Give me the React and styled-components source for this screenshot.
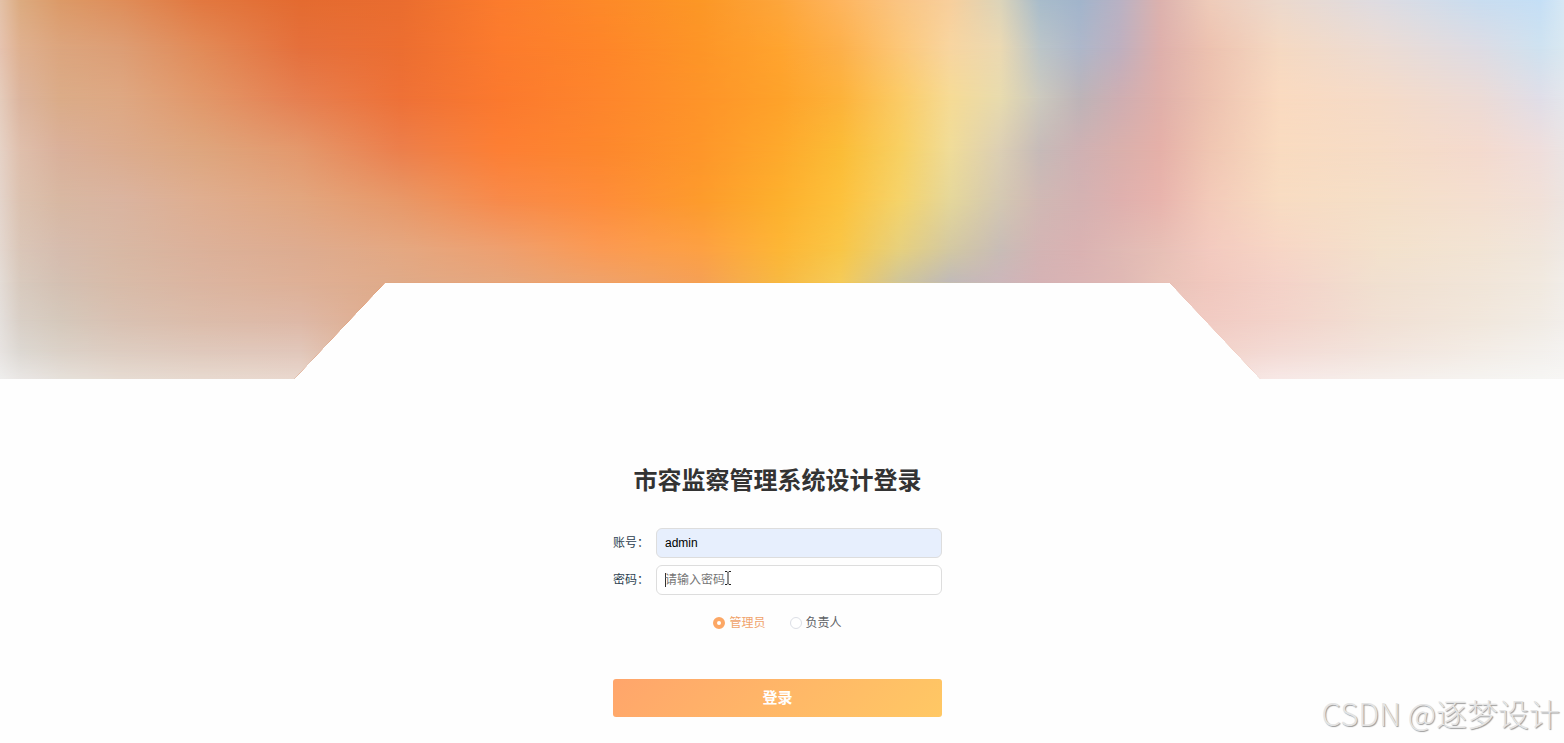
import React, { useState } from "react";
import styled, { createGlobalStyle } from "styled-components";

// Colour bands of the banner, top to bottom. Every band is a left-to-right
// gradient, and each one fades into the next.
const bannerWidth = 1564;
const bannerHeight = 379;
const stops = [0, 20, 60, 120, 200, 300, 400, 500, 600, 700, 780, 840, 900, 950, 1000, 1040, 1080, 1120, 1160, 1210, 1280, 1380, 1480, 1540, 1564];

const bands = [
  { y: 0, colors: "e4c2a8 dcab80 dc9a68 df8e5a e27840 e46b30 ea6d2f fc7c2d fd8929 fc9726 fda63c feb55e fac583 f8cf9c dcd4ba a8bccb a2b5cc b9b2c4 dcb2ae efccba ecd9cd dedce2 c9ddf0 c5dff6 d6e8f5" },
  { y: 48, colors: "e6c3b0 dfb190 dca57e dd9e75 e28b58 e5703c ec6e31 fc7b2d fe8529 fd9527 ffa42f fdb04a fcc778 f8d5a0 ebd9b2 bcc5c8 aeb7ca bfb0bf deb0ac edc2b0 f5d9c2 ecdcd4 dddce4 cfe2f0 d9e8f1" },
  { y: 98, colors: "e5ccbc dcb59e dbac88 dea883 e2986a e67f50 ee7137 fb792e fe852c fe9429 fea22a fdb23a fbcb66 f6db95 e8dbae ccc9be bdb4b8 cfaeb2 e0b0aa edc2b0 fadac0 f5dbc8 ecdbd6 e0dee8 e4e6ec" },
  { y: 150, colors: "e6d2c6 dfbfac dab09a dcac8e dea67e e4986c ec7f4c fd7f34 fd872d fe962a fea92c fbbc36 f8d062 f0dc98 dccfb4 c6bab8 cfb1b3 dab0ac e5b0a8 f0c6b2 f9dbc0 f6dcc6 f4dace efdedc ebe4e4" },
  { y: 200, colors: "e4d4cb dcc2b0 d8b8a2 dab4a0 dfae90 e2a67f e89868 f88a4a fe8c3a fd9b2c fdb02d fdc13c f5d36a e5d79a d4c8b2 d0b8b4 d4b2b2 dfb0ae e8b4ad f3cab9 f8dcc2 f5dfc8 f4dfd0 f1e0d8 ede4e0" },
  { y: 250, colors: "e4d8d0 dac6b8 d6bcae d8b8a4 dcb19a deac90 e4a882 eea070 fb9a54 fda044 fdb636 f9c646 e6d07e d3c8a2 c8bcb6 d4b4b4 dab2b2 e0b9b4 e7bfb6 f3cabf f7d6c6 f3e1cc f2e4d4 f0e6dc efe9e3" },
  { y: 282, colors: "e4dcd6 d8cabe d4c0b2 d8bba8 dbb5a0 deb096 e0aa88 e6a67c efa26a f5a055 f7b942 f5cb58 cfc59a c0bab8 ccb6ba d5b2b4 dab4b4 dfb8b4 e8c2b8 f1c8be f4d2c8 f1e0d0 f1e5d8 f1e9df f1ede8" },
  { y: 320, colors: "e4dfdc d9cfc6 d5c8bb d9c1b2 dcbcaa deb8a6 e0aa88 e6a67c efa26a f5a055 f7b942 f5cb58 cfc59a c0bab8 ccb6ba d5b2b4 dab4b4 dfb8b4 edcac2 f1cbc3 f3d3ca f1e0d4 f1e7dc f1ebe4 f2eeea" },
  { y: 350, colors: "e7e3e0 dcd7d1 dbd1c7 ddccc0 dfc8bb e1c6b9 e0aa88 e6a67c efa26a f5a055 f7b942 f5cb58 cfc59a c0bab8 ccb6ba d5b2b4 dab4b4 dfb8b4 edcac2 f2d2ca f3dad4 f2e4dc f3ece5 f3f0ec f4f2f0" },
  { y: 379, colors: "eeedec e9e6e4 e6e0da e6dbd2 e7d9cf e9d8ce e0aa88 e6a67c efa26a f5a055 f7b942 f5cb58 cfc59a c0bab8 ccb6ba d5b2b4 dab4b4 dfb8b4 edcac2 f5e0dc f7e8e6 f5eeea f5f3f0 f6f5f3 f7f6f4" },
];

const percent = (value, total) => `${((value / total) * 100).toFixed(2)}%`;

const bandGradient = (band) =>
  `linear-gradient(90deg, ${band.colors
    .split(" ")
    .map((color, i) => `#${color} ${percent(stops[i], bannerWidth)}`)
    .join(", ")})`;

const bandMask = (index) => {
  if (index === 0) return "none";
  const from = percent(bands[index - 1].y, bannerHeight);
  const to = percent(bands[index].y, bannerHeight);
  return `linear-gradient(180deg, transparent ${from}, #000 ${to})`;
};

const App = () => {
  const [account, setAccount] = useState("admin");
  const [password, setPassword] = useState("");
  const [role, setRole] = useState("管理员");

  return (
    <Page>
      <GlobalStyle />
      <Banner>
        {bands.map((band, i) => (
          <Band key={band.y} style={{ backgroundImage: bandGradient(band), maskImage: bandMask(i) }} />
        ))}
      </Banner>
      <Form onSubmit={(e) => e.preventDefault()}>
        <Title>市容监察管理系统设计登录</Title>
        <Fields>
          <Field>
            <FieldName htmlFor="account">账号：</FieldName>
            <Input
              id="account"
              $filled
              placeholder="请输入账号"
              value={account}
              onChange={(e) => setAccount(e.target.value)}
            />
          </Field>
          <Field>
            <FieldName htmlFor="password">密码：</FieldName>
            <Input
              id="password"
              type="password"
              placeholder="请输入密码"
              autoFocus
              value={password}
              onChange={(e) => setPassword(e.target.value)}
            />
            <Pointer viewBox="0 0 8 14" aria-hidden="true">
              <path d="M1 .5h2l1 1 1-1h2M4 1.5v11M1 13.5h2l1-1 1 1h2" />
            </Pointer>
          </Field>
        </Fields>
        <Roles>
          {["管理员", "负责人"].map((name) => (
            <Role key={name} $checked={role === name}>
              <Radio name="role" checked={role === name} onChange={() => setRole(name)} />
              {name}
            </Role>
          ))}
        </Roles>
        <Submit type="submit">登录</Submit>
      </Form>
      <Watermark>CSDN @逐梦设计</Watermark>
    </Page>
  );
};

export default App;

const GlobalStyle = createGlobalStyle`
  * {
    box-sizing: border-box;
  }
  body {
    margin: 0;
    background: #fefefe;
    font-family: "Liberation Sans", "Noto Sans CJK SC", sans-serif;
  }
`;

const Page = styled.main`
  position: relative;
  min-height: 100vh;
`;

const Banner = styled.div`
  display: grid;
  height: 379px;
  clip-path: polygon(
    0 0,
    100% 0,
    100% 100%,
    80.6% 100%,
    74.8% 74.6%,
    24.6% 74.6%,
    18.8% 100%,
    0 100%
  );
`;

const Band = styled.div`
  grid-area: 1 / 1;
`;

const Form = styled.form`
  display: flex;
  flex-direction: column;
  width: 338px;
  margin: 0 auto;
  padding: 84px 9px 24px 0;
`;

const Title = styled.h1`
  margin: 0 0 29px;
  color: #333;
  font-size: 24px;
  font-weight: 700;
  line-height: 36px;
  text-align: center;
  white-space: nowrap;
`;

const Fields = styled.div`
  display: flex;
  flex-direction: column;
  gap: 7px;
`;

const Field = styled.div`
  position: relative;
  display: flex;
  align-items: center;
`;

const FieldName = styled.label`
  width: 43px;
  color: #2c3e50;
  font-size: 12px;
  line-height: 18px;
`;

const Input = styled.input`
  flex: 1;
  min-width: 0;
  height: 30px;
  padding: 0 8px;
  border: 1px solid #ddd;
  border-radius: 6px;
  outline: none;
  background: ${(props) => (props.$filled ? "#e7effd" : "#fff")};
  color: #000;
  font-family: inherit;
  font-size: 12px;
  &::placeholder {
    color: #757575;
  }
  /* steady caret while the focused field is still empty */
  &:placeholder-shown:focus {
    background: linear-gradient(#333, #333) 8px center / 1px 14px no-repeat #fff;
    caret-color: transparent;
  }
`;

const Pointer = styled.svg`
  position: absolute;
  left: 111px;
  top: 6px;
  width: 8px;
  height: 14px;
  fill: none;
  stroke: #222;
  pointer-events: none;
`;

const Roles = styled.div`
  display: flex;
  justify-content: center;
  gap: 24px;
  margin-top: 18px;
`;

const Role = styled.label`
  display: flex;
  align-items: center;
  gap: 4px;
  color: ${(props) => (props.$checked ? "#f0a36b" : "#606266")};
  font-size: 12px;
  line-height: 20px;
`;

const Radio = styled.input.attrs({ type: "radio" })`
  appearance: none;
  width: 12px;
  height: 12px;
  margin: 0;
  border: 1px solid #dcdfe6;
  border-radius: 50%;
  background: #fff;
  &:checked {
    border: 4px solid #fca765;
  }
`;

const Submit = styled.button`
  height: 38px;
  margin-top: 46px;
  padding: 0 0 4px;
  border: none;
  border-radius: 3px;
  background: linear-gradient(135deg, #ffa56b, #ffc864);
  color: #fff;
  font-family: inherit;
  font-size: 15px;
  font-weight: 700;
`;

const Watermark = styled.div`
  position: absolute;
  right: 4px;
  bottom: 8px;
  color: #e4e4e4;
  font-family: "Noto Sans CJK SC", sans-serif;
  font-size: 31px;
  font-weight: 300;
  line-height: 44px;
  text-shadow: 1px 1px 1px #999;
`;
